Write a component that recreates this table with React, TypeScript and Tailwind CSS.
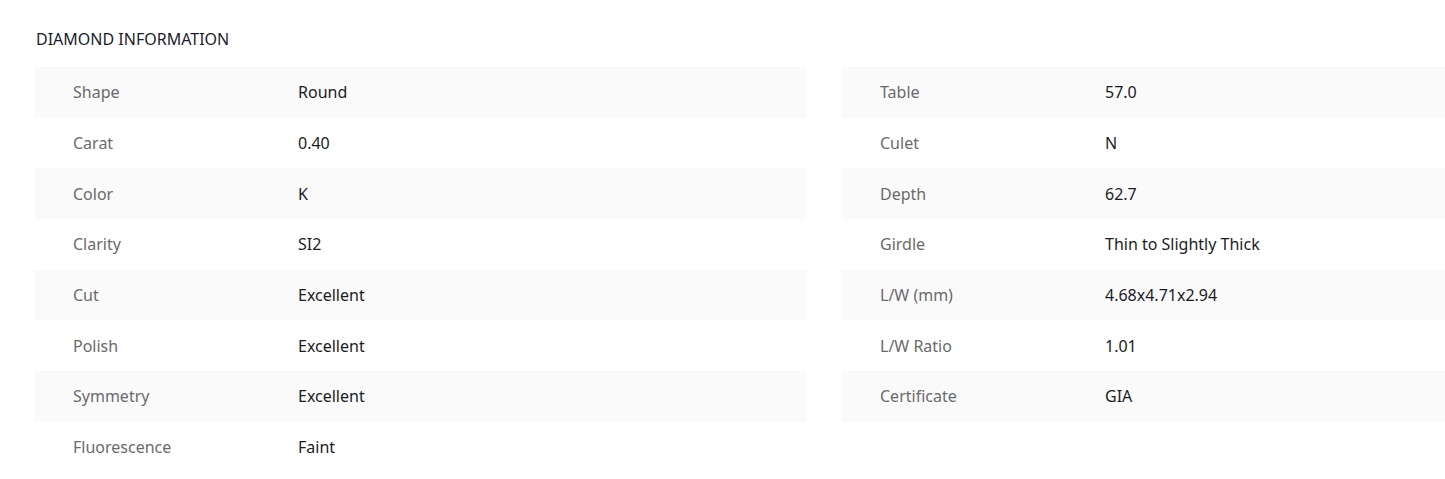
const left: [string, string][] = [
  ['Shape', 'Round'],
  ['Carat', '0.40'],
  ['Color', 'K'],
  ['Clarity', 'SI2'],
  ['Cut', 'Excellent'],
  ['Polish', 'Excellent'],
  ['Symmetry', 'Excellent'],
  ['Fluorescence', 'Faint'],
];

const right: [string, string][] = [
  ['Table', '57.0'],
  ['Culet', 'N'],
  ['Depth', '62.7'],
  ['Girdle', 'Thin to Slightly Thick'],
  ['L/W (mm)', '4.68x4.71x2.94'],
  ['L/W Ratio', '1.01'],
  ['Certificate', 'GIA'],
];

function InfoTable({ rows }: { rows: [string, string][] }) {
  return (
    <div className="flex flex-col">
      {rows.map(([label, value], i) => (
        <div
          key={label}
          className={`flex h-[50.7px] items-center ${i % 2 === 0 ? 'bg-[#fafafa]' : 'bg-white'}`}
        >
          <span className="w-[263px] shrink-0 pl-[38px] text-[#6b6b6b]">{label}</span>
          <span className="text-[#1c1c24]">{value}</span>
        </div>
      ))}
    </div>
  );
}

export default function App() {
  return (
    <div className="min-h-screen bg-white pl-[35px] pt-[29px] text-[16px] font-['Noto_Sans',sans-serif]">
      <h2 className="pl-px text-[16px] leading-[20px] text-[#1c1c2b]">DIAMOND INFORMATION</h2>
      <div className="mt-[18px] grid grid-cols-[771px_1fr] gap-[36px]">
        <InfoTable rows={left} />
        <InfoTable rows={right} />
      </div>
    </div>
  );
}
